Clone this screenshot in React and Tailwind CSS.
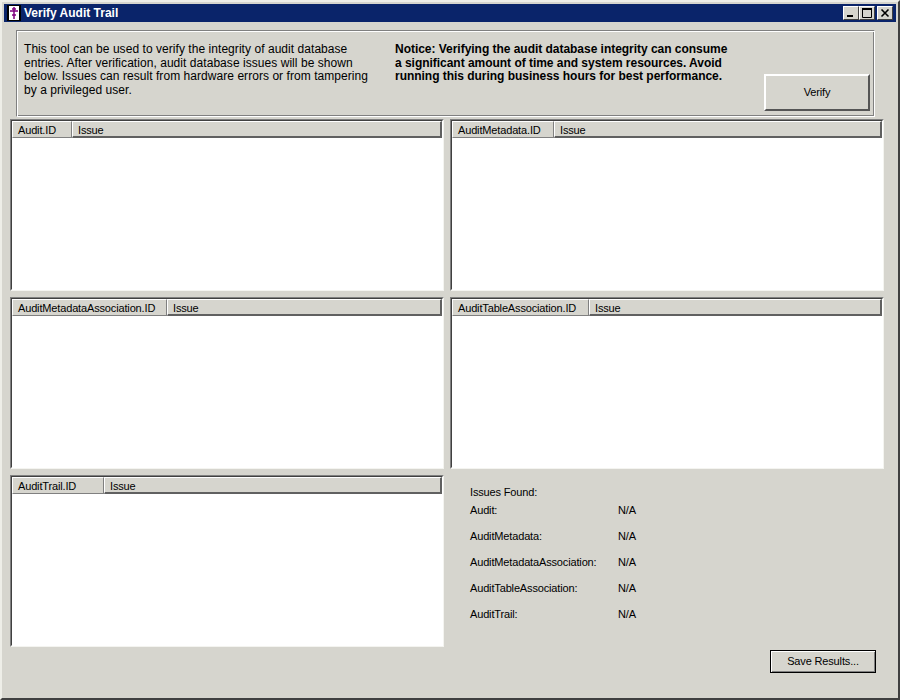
const columns = {
  audit: ['Audit.ID', 60],
  metadata: ['AuditMetadata.ID', 102],
  association: ['AuditMetadataAssociation.ID', 155],
  table: ['AuditTableAssociation.ID', 137],
  trail: ['AuditTrail.ID', 92],
}

const counts = ['Audit:', 'AuditMetadata:', 'AuditMetadataAssociation:', 'AuditTableAssociation:', 'AuditTrail:']

function ListPanel({ column }) {
  const [label, width] = columns[column]
  return (
    <div className="h-[172px] border border-t-[#808080] border-l-[#808080] border-r-[#f4f4f0] border-b-[#f4f4f0] bg-white">
      <div className="h-full border border-t-[#404040] border-l-[#404040] border-r-white border-b-white">
        <div className="flex h-[17px] bg-[#d6d5ce]">
          <div
            style={{ width }}
            className="h-[17px] shrink-0 pl-[5px] leading-[17px] border-t border-l border-t-white border-l-white border-r border-b border-r-[#808080] border-b-[#808080]"
          >
            {label}
          </div>
          <div className="h-[17px] grow pl-[5px] leading-[17px] border-t border-l border-t-white border-l-white border-r-2 border-b-2 border-r-[#606060] border-b-[#606060]">
            Issue
          </div>
        </div>
      </div>
    </div>
  )
}

function CaptionButton({ children }) {
  return (
    <div className="flex h-[14px] w-[16px] items-center justify-center bg-[#d6d5ce] border border-t-white border-l-white border-r-[#404040] border-b-[#404040]">
      <svg width="10" height="10" viewBox="0 0 10 10" fill="none" stroke="#000">{children}</svg>
    </div>
  )
}

export default function App() {
  return (
    <div className="h-[700px] w-[900px] border-2 border-t-[#eeeee8] border-l-[#eeeee8] border-r-[#404040] border-b-[#404040] bg-[#d6d5ce] font-['Liberation_Sans',sans-serif] text-[11px] tracking-[-0.15px] text-black">
      <div className="h-full border-2 border-[#d6d5ce]">
        {/* Title bar */}
        <div className="flex h-[18px] items-center bg-[#0a246a] pl-[3px] pr-[3px]">
          <svg width="14" height="16" viewBox="0 0 14 16" className="shrink-0">
            <rect x="0" y="0" width="14" height="16" fill="#000" />
            <rect x="2" y="1" width="10" height="14" fill="#fff" />
            <path d="M7 2v12M3 6h8M5 4h4M5 10h4" stroke="#800080" strokeWidth="1.5" />
          </svg>
          <span className="ml-[3px] text-[12px] font-bold tracking-normal text-white">Verify Audit Trail</span>
          <div className="ml-auto flex">
            <CaptionButton><path d="M1 8h6" strokeWidth="2" /></CaptionButton>
            <CaptionButton><path d="M0 1h10" strokeWidth="2" /><path d="M.5 1v8.5h9V1" /></CaptionButton>
            <div className="ml-[2px]">
              <CaptionButton><path d="M1.5 1.5l7 7M8.5 1.5l-7 7" strokeWidth="1.6" /></CaptionButton>
            </div>
          </div>
        </div>

        <div className="px-[6px]">
          {/* Notice box */}
          <div className="ml-[6px] mr-[15px] mt-[8px] flex h-[87px] border border-t-[#808080] border-l-[#808080] border-r-white border-b-white text-[12px] shadow-[inset_1px_1px_0_#fff,inset_-1px_-1px_0_#808080]">
            <p className="ml-[7px] mt-[12px] w-[355px] leading-[13.5px] tracking-[0.05px]">
              This tool can be used to verify the integrity of audit database entries. After verification, audit database issues will be shown below. Issues can result from hardware errors or from tampering by a privileged user.
            </p>
            <p className="ml-[16px] mt-[12px] w-[338px] font-bold leading-[13.5px] tracking-[-0.03px]">
              Notice: Verifying the audit database integrity can consume a significant amount of time and system resources. Avoid running this during business hours for best performance.
            </p>
            <button className="ml-[31px] mt-[43px] h-[37px] w-[106px] border-2 border-t-white border-l-white border-r-[#555555] border-b-[#555555] bg-[#d6d5ce] text-[11px]">
              Verify
            </button>
          </div>

          {/* Result lists */}
          <div className="mt-[2px] grid grid-cols-[434px_434px] gap-[6px]">
            <ListPanel column="audit" />
            <ListPanel column="metadata" />
            <ListPanel column="association" />
            <ListPanel column="table" />
            <ListPanel column="trail" />
            <div className="pl-[20px] pt-[9px]">
              <div className="h-[17px] leading-[16px]">Issues Found:</div>
              {counts.map(name => (
                <div key={name} className="flex h-[26px] leading-[18px]">
                  <span className="w-[148px]">{name}</span>
                  <span>N/A</span>
                </div>
              ))}
            </div>
          </div>

          {/* Footer */}
          <div className="mt-[3px] flex justify-end pr-[14px]">
            <button className="h-[23px] w-[106px] border border-black bg-[#d6d5ce] shadow-[inset_1px_1px_0_#fff,inset_-1px_-1px_0_#808080]">
              Save Results...
            </button>
          </div>
        </div>
      </div>
    </div>
  )
}
